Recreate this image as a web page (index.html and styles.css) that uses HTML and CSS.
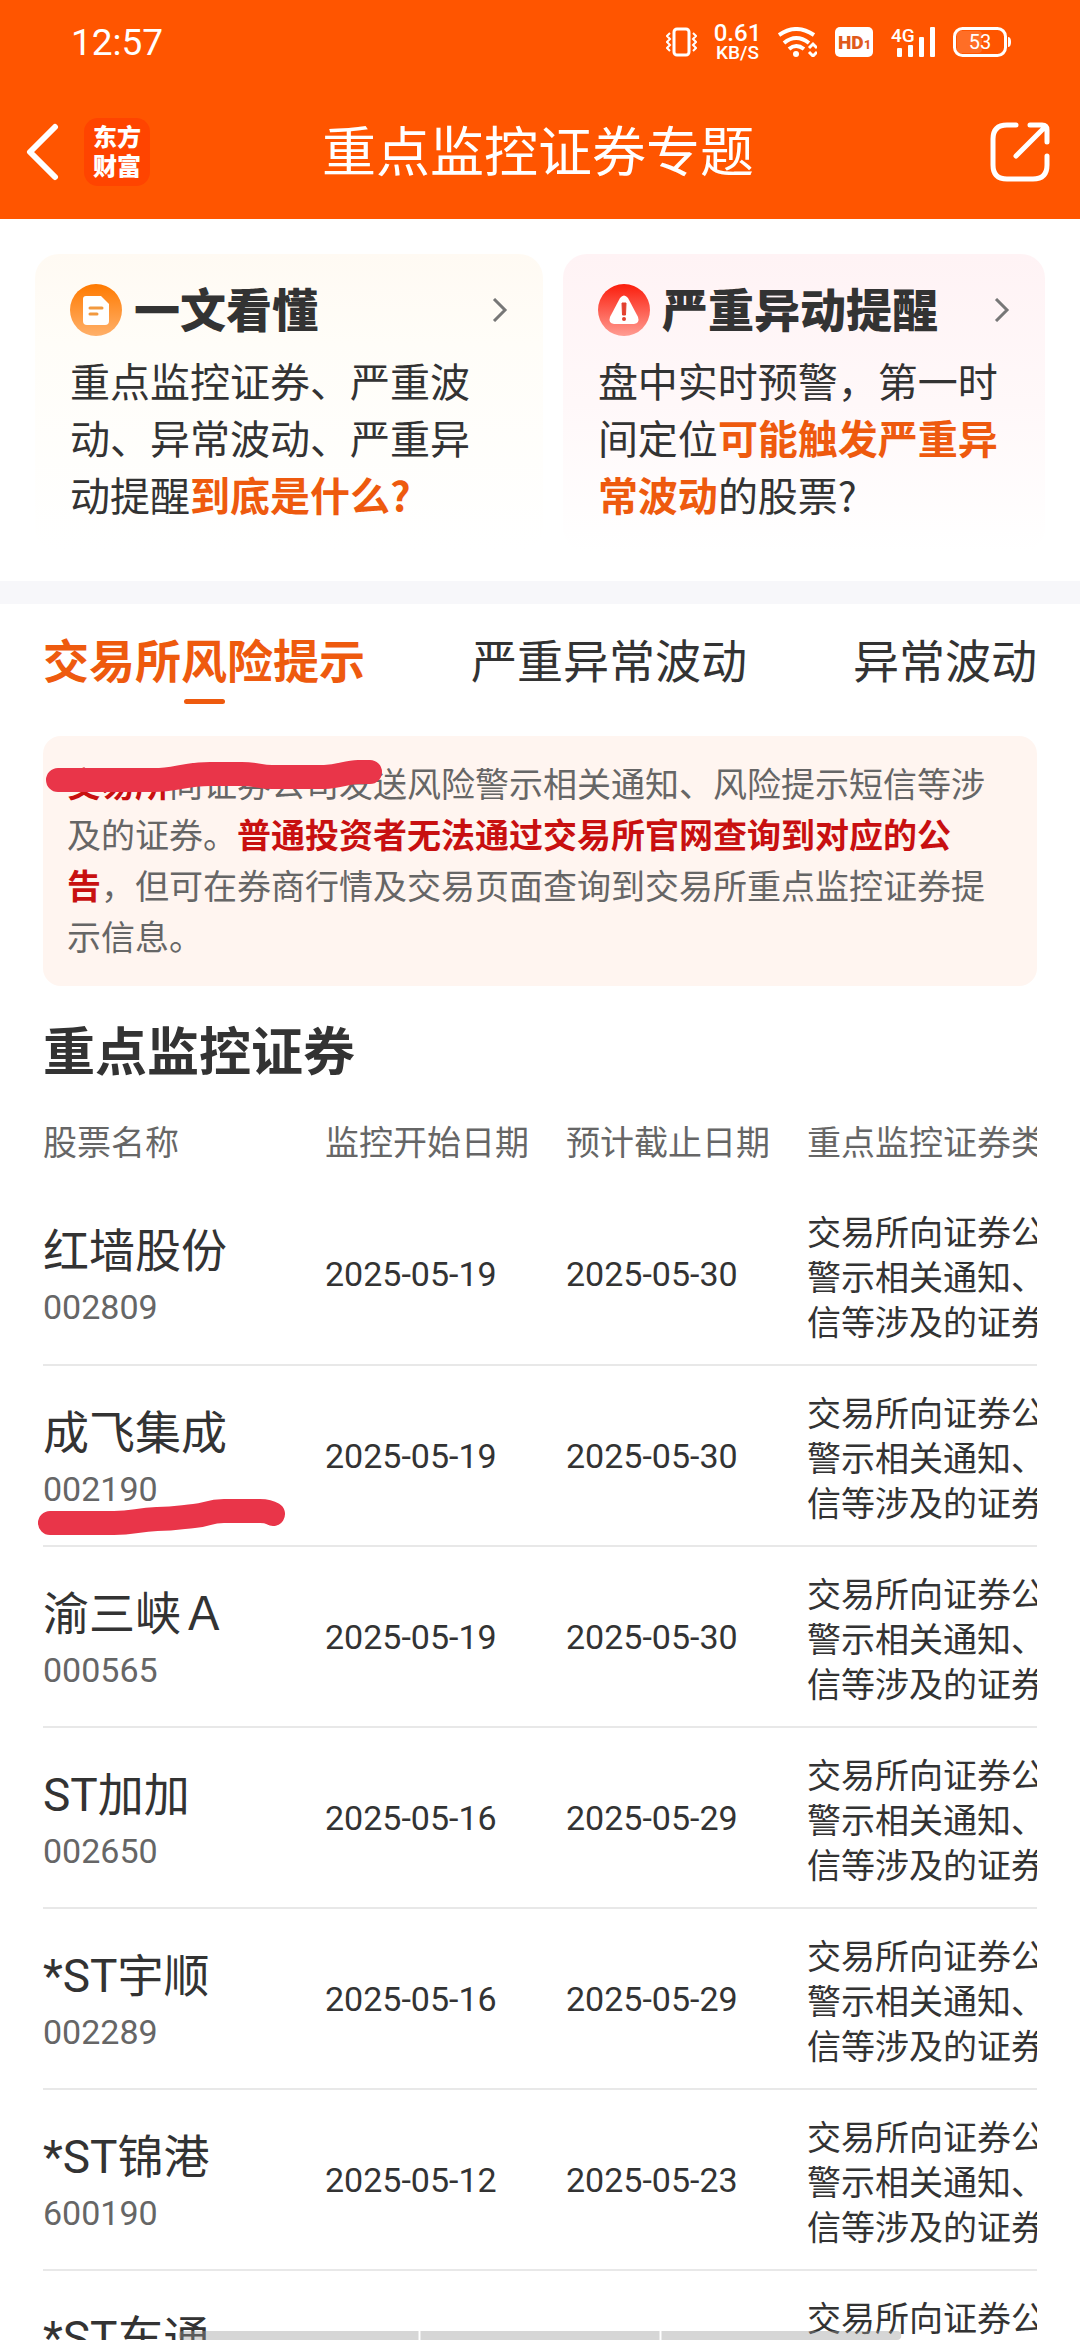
FILE: index.html
```html
<!DOCTYPE html>
<html lang="zh-CN">
<head>
    <meta charset="UTF-8">
    <meta name="viewport" content="width=device-width, initial-scale=1.0">
    <title>重点监控证券专题</title>
    <link rel="stylesheet" href="styles.css">
</head>
<body>
    <div class="app">
        <header class="header">
            <div class="status-bar">
                <span class="time">12:57</span>
                <div class="status-icons">
                    <svg width="31" height="30" viewBox="0 0 31 30" fill="none" stroke="#fff" stroke-width="2">
                        <rect x="8" y="2" width="15" height="26" rx="3" stroke-width="3"/>
                        <path d="M4 6l-3 3 3 3-3 3 3 3-3 3 3 3M27 6l3 3-3 3 3 3-3 3 3 3-3 3"/>
                    </svg>
                    <div class="net-speed"><span class="speed">0.61</span><span class="unit">KB/S</span></div>
                    <svg width="39" height="30" viewBox="0 0 39 30" fill="none" stroke="#fff" stroke-width="4">
                        <path d="M1 8Q18 -4 36 8M6 16Q18 6 31 16M11 22Q18 16 26 22"/>
                        <circle cx="18" cy="27" r="3" fill="#fff" stroke="none"/>
                        <path d="M31 21l4-4 4 4M31 25l4 4 4-4" stroke-width="3"/>
                    </svg>
                    <svg width="38" height="30" viewBox="0 0 38 30">
                        <rect width="38" height="30" rx="5" fill="#fff"/>
                        <text class="hd-text" x="3" y="22" font-size="19">HD</text>
                        <text class="hd-text" x="29" y="22" font-size="12">1</text>
                    </svg>
                    <svg width="44" height="30" viewBox="0 0 44 30" fill="#fff">
                        <text class="lte-text" x="0" y="15" font-size="19">4G</text>
                        <rect x="6" y="21" width="5" height="9" rx="1"/>
                        <rect x="17" y="18" width="5" height="12" rx="1"/>
                        <rect x="28" y="10" width="5" height="20" rx="1"/>
                        <rect x="39" y="0" width="5" height="30" rx="1"/>
                    </svg>
                    <svg width="58" height="30" viewBox="0 0 58 30">
                        <rect x="4" y="4" width="25" height="22" rx="4" fill="#fff" opacity=".15"/>
                        <rect x="1.500" y="1.500" width="51" height="27" rx="8" fill="none" stroke="#fff" stroke-width="3"/>
                        <path d="M55 10q3 0 3 5t-3 5z" fill="#fff"/>
                        <text class="battery-text" x="27" y="22" font-size="20" text-anchor="middle">53</text>
                    </svg>
                </div>
            </div>
            <div class="nav-bar">
                <div class="nav-left">
                    <button type="button" class="icon-button" aria-label="返回">
                        <svg width="34" height="58" viewBox="0 0 34 58" fill="none" stroke="#fff" stroke-width="6" stroke-linecap="round" stroke-linejoin="round">
                            <path d="M29 4L4 29l25 25"/>
                        </svg>
                    </button>
                    <div class="logo">东方<br>财富</div>
                </div>
                <h1 class="nav-title">重点监控证券专题</h1>
                <div class="nav-right">
                    <button type="button" class="icon-button" aria-label="分享">
                        <svg width="60" height="60" viewBox="0 0 60 60" fill="none" stroke="#fff" stroke-width="5" stroke-linecap="round" stroke-linejoin="round">
                            <path d="M26 3H17Q3 3 3 17V43Q3 57 17 57H43Q57 57 57 43V34"/>
                            <path d="M40 3H52Q57 3 57 8V20M54 6L26 34"/>
                        </svg>
                    </button>
                </div>
            </div>
        </header>

        <main class="content">
            <section class="cards">
                <a href="#guide" class="card card-guide">
                    <div class="card-head">
                        <svg class="card-icon" width="52" height="52" viewBox="0 0 52 52">
                            <defs>
                                <linearGradient id="orange" x1="0" y1="0" x2="0" y2="1">
                                    <stop offset="0" stop-color="#ff7a00"/>
                                    <stop offset="1" stop-color="#ffb06a"/>
                                </linearGradient>
                            </defs>
                            <circle cx="26" cy="26" r="26" fill="url(#orange)"/>
                            <path d="M16 12H31L39 20V37Q39 41 35 41H17Q13 41 13 37V15Q13 12 16 12Z" fill="#fff"/>
                            <path d="M20 24H32M20 30H27" stroke="#f2993f" stroke-width="3" stroke-linecap="round"/>
                        </svg>
                        <h2 class="card-title">一文看懂</h2>
                        <svg class="chevron" width="16" height="24" viewBox="0 0 16 24" fill="none" stroke="#777" stroke-width="3">
                            <path d="M2 1l11 11L2 23"/>
                        </svg>
                    </div>
                    <p class="card-text">重点监控证券、严重波动、异常波动、严重异动提醒<b>到底是什么?</b></p>
                </a>
                <a href="#alert" class="card card-alert">
                    <div class="card-head">
                        <svg class="card-icon" width="52" height="52" viewBox="0 0 52 52">
                            <defs>
                                <linearGradient id="red" x1="0" y1="0" x2="0" y2="1">
                                    <stop offset="0" stop-color="#fb1d0c"/>
                                    <stop offset="1" stop-color="#ff9c92"/>
                                </linearGradient>
                            </defs>
                            <circle cx="26" cy="26" r="26" fill="url(#red)"/>
                            <path d="M22 14Q26 9 30 14L40 33Q42 39 36 40H16Q10 39 12 33Z" fill="#fff"/>
                            <path d="M24 19H28L27.500 31H24.500Z" fill="#e3402f" stroke="#e3402f" stroke-linejoin="round"/>
                            <circle cx="26" cy="35" r="2" fill="#e3402f"/>
                        </svg>
                        <h2 class="card-title">严重异动提醒</h2>
                        <svg class="chevron" width="16" height="24" viewBox="0 0 16 24" fill="none" stroke="#777" stroke-width="3">
                            <path d="M2 1l11 11L2 23"/>
                        </svg>
                    </div>
                    <p class="card-text">盘中实时预警，第一时间定位<b>可能触发严重异常波动</b>的股票?</p>
                </a>
            </section>

            <nav class="tabs">
                <button type="button" class="tab active">交易所风险提示</button>
                <button type="button" class="tab">严重异常波动</button>
                <button type="button" class="tab">异常波动</button>
            </nav>

            <p class="notice"><b>交易所</b>向证券公司发送风险警示相关通知、风险提示短信等涉及的证券。<b>普通投资者无法通过交易所官网查询到对应的公告</b>，但可在券商行情及交易页面查询到交易所重点监控证券提示信息。</p>

            <section class="stocks">
                <h2 class="stocks-title">重点监控证券</h2>
                <div class="table-scroll">
                    <table class="stock-table">
                        <colgroup>
                            <col class="col-name">
                            <col class="col-date">
                            <col class="col-date">
                            <col class="col-type">
                        </colgroup>
                        <thead>
                            <tr>
                                <th>股票名称</th>
                                <th>监控开始日期</th>
                                <th>预计截止日期</th>
                                <th>重点监控证券类型</th>
                            </tr>
                        </thead>
                        <tbody>
                            <tr>
                                <td><span class="name">红墙股份</span><span class="code">002809</span></td>
                                <td>2025-05-19</td>
                                <td>2025-05-30</td>
                                <td class="type">交易所向证券公司发送风险警示相关通知、风险提示短信等涉及的证券</td>
                            </tr>
                            <tr>
                                <td><span class="name">成飞集成</span><span class="code">002190</span></td>
                                <td>2025-05-19</td>
                                <td>2025-05-30</td>
                                <td class="type">交易所向证券公司发送风险警示相关通知、风险提示短信等涉及的证券</td>
                            </tr>
                            <tr>
                                <td><span class="name">渝三峡Ａ</span><span class="code">000565</span></td>
                                <td>2025-05-19</td>
                                <td>2025-05-30</td>
                                <td class="type">交易所向证券公司发送风险警示相关通知、风险提示短信等涉及的证券</td>
                            </tr>
                            <tr>
                                <td><span class="name">ST加加</span><span class="code">002650</span></td>
                                <td>2025-05-16</td>
                                <td>2025-05-29</td>
                                <td class="type">交易所向证券公司发送风险警示相关通知、风险提示短信等涉及的证券</td>
                            </tr>
                            <tr>
                                <td><span class="name">*ST宇顺</span><span class="code">002289</span></td>
                                <td>2025-05-16</td>
                                <td>2025-05-29</td>
                                <td class="type">交易所向证券公司发送风险警示相关通知、风险提示短信等涉及的证券</td>
                            </tr>
                            <tr>
                                <td><span class="name">*ST锦港</span><span class="code">600190</span></td>
                                <td>2025-05-12</td>
                                <td>2025-05-23</td>
                                <td class="type">交易所向证券公司发送风险警示相关通知、风险提示短信等涉及的证券</td>
                            </tr>
                            <tr>
                                <td><span class="name">*ST车通</span><span class="code">&nbsp;</span></td>
                                <td></td>
                                <td></td>
                                <td class="type">交易所向证券公司发送风险警示相关通知、风险提示短信等涉及的证券</td>
                            </tr>
                        </tbody>
                    </table>
                </div>
            </section>

            <!-- hand-drawn marker strokes -->
            <svg class="marker marker-notice" width="340" height="40" viewBox="0 0 340 40">
                <path d="M14 24H110C132 24 140 18 166 18H198C212 18 216 21 228 21H280C296 21 302 16 314 16H326"/>
            </svg>
            <svg class="marker marker-stock" width="250" height="42" viewBox="0 0 250 42">
                <path d="M14 27H78C98 27 100 24 121 23C140 23 146 21 158 20C172 19 172 15 188 15H224Q232 15 237 18"/>
            </svg>
        </main>

        <div class="gesture-bar"><span></span><span></span><span></span></div>
    </div>
</body>
</html>
```

FILE: styles.css
```css
* {
    box-sizing: border-box;
}
body {
    margin: 0;
    background-color: #fff;
    color: #333;
    font-family: "Noto Sans CJK SC", sans-serif;
}
h1, h2, p {
    margin: 0;
}
button {
    border: none;
    background: none;
    padding: 0;
    color: inherit;
    font-family: inherit;
    cursor: pointer;
}
svg {
    display: block;
    flex: none;
}
.app {
    position: relative;
    height: 100vh;
    overflow: hidden;
}

/* Header */
.header {
    background-color: #ff5500;
    color: #fff;
}
.status-bar {
    display: flex;
    justify-content: space-between;
    align-items: center;
    height: 84px;
    padding: 0 69px 0 71px;
    font-family: Roboto, sans-serif;
}
.time {
    font-size: 37px;
}
.status-icons {
    display: flex;
    align-items: center;
    gap: 18px;
}
.net-speed {
    display: flex;
    flex-direction: column;
    align-items: center;
    width: 45px;
    font-weight: 500;
}
.speed {
    font-size: 24px;
    line-height: 22px;
}
.unit {
    font-size: 19px;
    line-height: 18px;
}
.hd-text {
    fill: #e05a1c;
    font-weight: 900;
}
.lte-text {
    font-weight: 500;
}
.battery-text {
    fill: #fff;
}
.nav-bar {
    display: flex;
    align-items: center;
    height: 135px;
    padding: 0 30px 0 26px;
}
.nav-left, .nav-right {
    flex: 1;
    display: flex;
    align-items: center;
    gap: 24px;
}
.nav-right {
    justify-content: flex-end;
}
.logo {
    width: 66px;
    height: 68px;
    padding-top: 3px;
    border-radius: 14px;
    background-color: #ff4400;
    font-size: 24px;
    font-weight: 900;
    line-height: 29px;
    text-align: center;
}
.nav-title {
    padding-bottom: 6px;
    font-size: 54px;
    font-weight: 400;
    line-height: 80px;
}

/* Cards */
.content {
    position: relative;
}
.cards {
    display: flex;
    gap: 20px;
    padding: 35px 35px 29px;
    border-bottom: 23px solid #f7f7fa;
}
.card {
    padding: 28px 35px;
    border-radius: 24px;
    color: inherit;
    text-decoration: none;
}
.card-guide {
    flex: 51 1 0;
    background: linear-gradient(#fffaf3, #fffdf8 30%, #fff);
}
.card-alert {
    flex: 48 1 0;
    background: linear-gradient(#fff3f5, #fff8f9 50%, #fff);
}
.card-head {
    display: flex;
    align-items: center;
    height: 56px;
    margin-bottom: 14px;
}
.card-title {
    margin-left: 12px;
    padding-bottom: 6px;
    font-size: 46px;
    font-weight: 900;
    line-height: 50px;
}
.chevron {
    margin-left: auto;
}
.card-text {
    max-width: 410px;
    padding-bottom: 1px;
    font-size: 40px;
    line-height: 57px;
}
.card-text b {
    color: #ee5a0e;
}

/* Tabs */
.tabs {
    display: flex;
    justify-content: space-between;
    padding: 27px 43px 32px;
}
.tab {
    display: flex;
    flex-direction: column;
    align-items: center;
    font-size: 46px;
    line-height: 54px;
}
.tab::after {
    content: "";
    width: 41px;
    height: 5px;
    margin-top: 14px;
    border-radius: 3px;
}
.tab.active {
    color: #ee5a0e;
    font-weight: 700;
}
.tab.active::after {
    background-color: #ee5a0e;
}

/* Notice */
.notice {
    margin: 0 43px;
    padding: 21px 24px 25px;
    border-radius: 18px;
    background-color: #fff5f0;
    color: #666;
    font-size: 34px;
    line-height: 51px;
}
.notice b {
    color: #c81010;
}

/* Stock table */
.stocks {
    padding: 24px 43px 0;
}
.stocks-title {
    margin-bottom: 8px;
    font-size: 52px;
    font-weight: 700;
    line-height: 78px;
}
.table-scroll {
    overflow-x: auto;
    scrollbar-width: none;
}
.stock-table {
    width: 1180px;
    table-layout: fixed;
    border-collapse: collapse;
    font-size: 34px;
}
.col-name {
    width: 282px;
}
.col-date {
    width: 241px;
}
.stock-table th {
    height: 88px;
    padding: 0;
    color: #666;
    font-weight: 400;
    text-align: left;
}
.stock-table td {
    height: 181px;
    padding: 0;
    border-bottom: 2px solid #e8e8e8;
    font-family: Roboto, "Noto Sans CJK SC", sans-serif;
}
.stock-table .type {
    padding-top: 8px;
    line-height: 45px;
}
.name {
    display: block;
    font-size: 46px;
    line-height: 66px;
}
.code {
    display: block;
    color: #666;
    line-height: 46px;
}

/* Marker strokes */
.marker {
    position: absolute;
    fill: none;
    stroke: #e93549;
    stroke-width: 24px;
    stroke-linecap: round;
    stroke-linejoin: round;
}
.marker-notice {
    top: 537px;
    left: 44px;
}
.marker-stock {
    top: 1277px;
    left: 36px;
}

/* System gesture bar */
.gesture-bar {
    position: absolute;
    bottom: 0;
    left: 50%;
    display: flex;
    gap: 2px;
    width: 723px;
    height: 9px;
    border-radius: 5px;
    overflow: hidden;
    transform: translateX(-50%);
}
.gesture-bar span {
    flex: 1;
    background-color: rgba(152, 152, 152, 0.4);
}
```
